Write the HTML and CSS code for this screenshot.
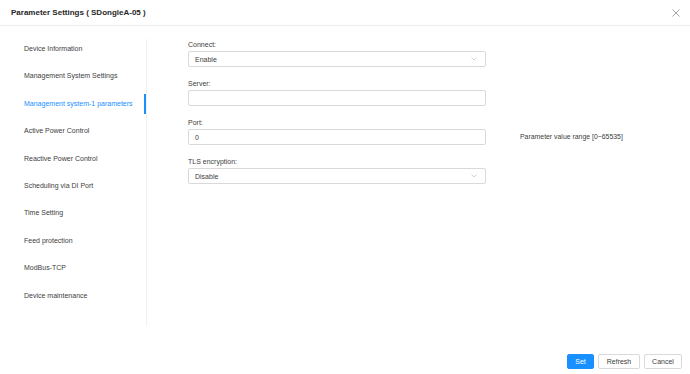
FILE: index.html
```html
<!DOCTYPE html>
<html>
<head>
<meta charset="utf-8">
<link rel="stylesheet" href="styles.css">
</head>
<body>
<div class="dialog">
  <div class="header">
    <div class="title">Parameter Settings ( SDongleA-05 )</div>
    <svg class="close" width="8" height="8" viewBox="0 0 8 8"><path d="M0.5 0.5L7.5 7.5M7.5 0.5L0.5 7.5" stroke="#8c8c8c" stroke-width="0.8" fill="none"/></svg>
  </div>
  <div class="body">
    <div class="sidebar">
      <div class="item">Device Information</div>
      <div class="item">Management System Settings</div>
      <div class="item active">Management system-1 parameters</div>
      <div class="item">Active Power Control</div>
      <div class="item">Reactive Power Control</div>
      <div class="item">Scheduling via DI Port</div>
      <div class="item">Time Setting</div>
      <div class="item">Feed protection</div>
      <div class="item">ModBus-TCP</div>
      <div class="item">Device maintenance</div>
    </div>
    <div class="content">
      <div class="row">
        <div class="field">
          <div class="label">Connect:</div>
          <div class="box select"><span>Enable</span><svg width="6" height="4" viewBox="0 0 6 4"><path d="M0.5 0.5L3 3L5.5 0.5" stroke="#bfbfbf" stroke-width="0.7" fill="none"/></svg></div>
        </div>
      </div>
      <div class="row">
        <div class="field">
          <div class="label">Server:</div>
          <div class="box"></div>
        </div>
      </div>
      <div class="row">
        <div class="field">
          <div class="label">Port:</div>
          <div class="box"><span>0</span></div>
        </div>
        <div class="hint">Parameter value range [0~65535]</div>
      </div>
      <div class="row">
        <div class="field">
          <div class="label">TLS encryption:</div>
          <div class="box select"><span>Disable</span><svg width="6" height="4" viewBox="0 0 6 4"><path d="M0.5 0.5L3 3L5.5 0.5" stroke="#bfbfbf" stroke-width="0.7" fill="none"/></svg></div>
        </div>
      </div>
    </div>
  </div>
  <div class="footer">
    <button class="btn primary">Set</button>
    <button class="btn refresh">Refresh</button>
    <button class="btn cancel">Cancel</button>
  </div>
</div>
</body>
</html>
```
FILE: styles.css
```css
html, body {
  margin: 0;
  padding: 0;
  background: #fff;
}
body {
  font-family: "Liberation Sans", Arial, sans-serif;
  color: #333;
  width: 690px;
  height: 374px;
  overflow: hidden;
}
.dialog {
  display: flex;
  flex-direction: column;
  height: 374px;
}
.header {
  height: 25px;
  border-bottom: 1px solid #ececec;
  padding: 0 10px 0 11px;
  display: flex;
  align-items: center;
  justify-content: space-between;
}
.title {
  font-size: 8px;
  font-weight: bold;
  color: #262626;
}
.close {
  display: block;
}
.body {
  flex: 1;
  display: flex;
  align-items: flex-start;
}
.sidebar {
  width: 146px;
  height: 287px;
  margin-top: 13px;
  border-right: 1px solid #f0f0f0;
  display: flex;
  flex-direction: column;
  gap: 7.4px;
}
.item {
  height: 20px;
  line-height: 20px;
  padding-left: 24px;
  font-size: 7px;
  color: #404040;
}
.item.active {
  color: #1890ff;
  box-shadow: inset -2px 0 0 #1890ff;
}
.content {
  padding-left: 41px;
  padding-top: 14px;
  display: flex;
  flex-direction: column;
  gap: 12px;
}
.row {
  display: flex;
  align-items: flex-end;
  gap: 34px;
}
.field {
  width: 298px;
  display: flex;
  flex-direction: column;
  gap: 1px;
}
.label {
  height: 10px;
  line-height: 10px;
  font-size: 7px;
  color: #404040;
}
.box {
  height: 14px;
  border: 1px solid #d9d9d9;
  border-radius: 2px;
  padding: 0 8px 0 6px;
  display: flex;
  align-items: center;
  justify-content: space-between;
  font-size: 7px;
  color: #404040;
}
.box svg {
  display: block;
}
.hint {
  font-size: 6.9px;
  color: #404040;
  height: 16px;
  line-height: 16px;
}
.footer {
  display: flex;
  justify-content: flex-end;
  gap: 4px;
  padding: 0 8px 5px 0;
}
.btn {
  height: 15px;
  padding: 0;
  font-family: "Liberation Sans", Arial, sans-serif;
  font-size: 7px;
  color: #404040;
  background: #fff;
  border: 1px solid #d9d9d9;
  border-radius: 2px;
  margin: 0;
  text-align: center;
}
.btn.primary {
  width: 27px;
  background: #1890ff;
  border-color: #1890ff;
  color: #fff;
}
.btn.refresh {
  width: 42px;
}
.btn.cancel {
  width: 38px;
}
```
